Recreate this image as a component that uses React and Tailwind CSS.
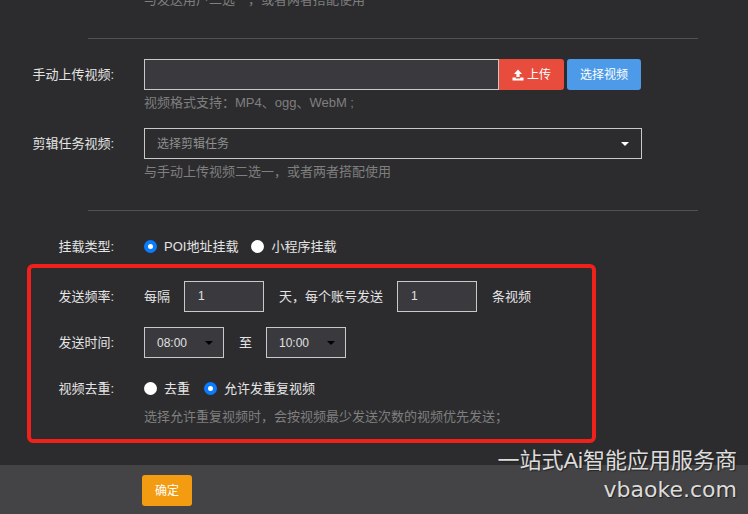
import React from "react";

function Label({ children }) {
  return <div className="w-[114px] shrink-0 text-right text-[13px] leading-[31px] text-[#e4e4e4] mr-[30px]">{children}</div>;
}
function Hint({ children, className = "" }) {
  return <div className={"text-[13px] leading-[18px] text-[#7f7f7f] " + className}>{children}</div>;
}
function Radio({ on, label, gap }) {
  return (
    <div className={"flex items-center " + gap}>
      <span className={"w-[13px] h-[13px] rounded-full bg-white mr-[7px] box-border " + (on ? "border-[4px] border-[#0a7bff]" : "")} />
      <span className="text-[13px] text-[#e4e4e4]">{label}</span>
    </div>
  );
}
function NumBox({ children }) {
  return <div className="w-[80px] h-[31px] border border-[#c9c9c9] bg-[#3a3a3e] pl-[13px] text-[12px] leading-[29px] text-[#e0e0e0]">{children}</div>;
}
function TimeBox({ children }) {
  return (
    <div className="w-[80px] h-[31px] border border-[#c9c9c9] bg-[#3a3a3e] pl-[12px] pr-[10px] flex items-center justify-between text-[12px] text-[#e0e0e0]">
      <span>{children}</span>
      <span className="w-0 h-0 border-x-[4px] border-x-transparent border-t-[4px] border-t-black" />
    </div>
  );
}

export default function App() {
  return (
    <div className="relative w-[748px] h-[514px] overflow-hidden bg-[#2c2c2e] flex flex-col font-['Liberation_Sans','Noto_Sans_CJK_SC',sans-serif]">
      <div className="flex-1 min-h-0">
        <Hint className="ml-[144px] mt-[-9px]">与发送用户二选一，或者两者搭配使用</Hint>
        <div className="ml-[88px] w-[610px] h-px bg-[#515153] mt-[29px]" />

        <div className="flex mt-[20px]">
          <Label>手动上传视频:</Label>
          <div className="flex">
            <div className="w-[355px] h-[31px] border border-[#c9c9c9] bg-[#3a3a3e]" />
            <button className="w-[65px] h-[31px] bg-[#e74c3c] rounded-r-[3px] text-white text-[12px] flex items-center justify-center gap-[3px]">
              <svg width="12" height="12" viewBox="0 0 12 12" fill="#fff"><path d="M6 0.5 L10 5 H7.6 V8 H4.4 V5 H2 Z" /><path d="M0.5 8.5 H3.8 V9.4 H8.2 V8.5 H11.5 V11.5 H0.5 Z" /></svg>
              上传
            </button>
            <button className="ml-[3px] w-[74px] h-[31px] bg-[#4d9be8] rounded-[3px] text-white text-[12px]">选择视频</button>
          </div>
        </div>
        <Hint className="ml-[144px] mt-[4px]">视频格式支持：MP4、ogg、WebM ;</Hint>

        <div className="flex mt-[16px]">
          <Label>剪辑任务视频:</Label>
          <div className="w-[498px] h-[31px] border border-[#c9c9c9] flex items-center justify-between pl-[12px] pr-[12px] text-[12px] text-[#8f8f8f]">
            <span>选择剪辑任务</span>
            <span className="w-0 h-0 border-x-[4px] border-x-transparent border-t-[4px] border-t-white" />
          </div>
        </div>
        <Hint className="ml-[144px] mt-[4px]">与手动上传视频二选一，或者两者搭配使用</Hint>

        <div className="ml-[88px] w-[610px] h-px bg-[#515153] mt-[29px]" />

        <div className="flex items-center mt-[20px] h-[31px]">
          <Label>挂载类型:</Label>
          <Radio on label="POI地址挂载" gap="mr-[13px]" />
          <Radio label="小程序挂载" />
        </div>

        <div className="flex items-center mt-[19px] text-[13px] text-[#e4e4e4]">
          <Label>发送频率:</Label>
          <span className="w-[40px]">每隔</span>
          <NumBox>1</NumBox>
          <span className="ml-[15px] w-[118px]">天，每个账号发送</span>
          <NumBox>1</NumBox>
          <span className="ml-[15px]">条视频</span>
        </div>

        <div className="flex items-center mt-[15px] text-[13px] text-[#e4e4e4]">
          <Label>发送时间:</Label>
          <TimeBox>08:00</TimeBox>
          <span className="w-[42px] pl-[15px]">至</span>
          <TimeBox>10:00</TimeBox>
        </div>

        <div className="flex items-center mt-[15px] h-[31px]">
          <Label>视频去重:</Label>
          <Radio label="去重" gap="mr-[14px]" />
          <Radio on label="允许发重复视频" />
        </div>
        <Hint className="ml-[144px] mt-[4px]">选择允许重复视频时，会按视频最少发送次数的视频优先发送；</Hint>
      </div>

      <div className="h-[49px] shrink-0 bg-[#444446] pt-[10px] pl-[142px]">
        <button className="w-[50px] h-[31px] rounded-[3px] bg-[#f39c12] text-white text-[12px]">确定</button>
      </div>

      <div className="absolute left-[27px] top-[264px] w-[569px] h-[179px] border-[4px] border-[#f0201a] rounded-[6px] pointer-events-none" />
      <div className="absolute right-[11px] top-[446px] text-right text-[22px] leading-[29px] text-[#dcdcdc] [text-shadow:1px_1px_1px_#222]">
        <div>一站式Ai智能应用服务商</div>
        <div className="font-['DejaVu_Sans',sans-serif]">vbaoke.com</div>
      </div>
    </div>
  );
}
